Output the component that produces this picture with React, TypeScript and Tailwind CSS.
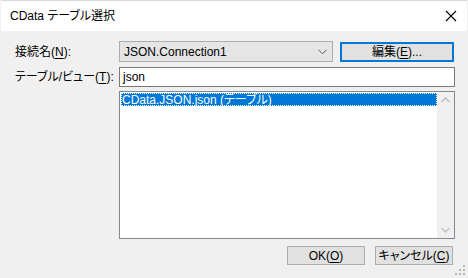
import React from "react";

const font = {
  fontFamily: '"Liberation Sans", "Noto Sans CJK JP", sans-serif',
  fontFeatureSettings: '"palt"',
};

function U({ c }: { c: string }) {
  return <span className="underline underline-offset-2">{c}</span>;
}

export default function App() {
  return (
    <div className="w-[468px] h-[278px] bg-[#f0f0f0] flex flex-col text-[12px] text-black overflow-hidden relative" style={font}>
      {/* title bar */}
      <div className="h-[31px] bg-white flex items-center justify-between pl-[9px] pr-[10px] mx-[1px] border-t border-[#d9d9d9]">
        <span className="text-[12px] leading-none whitespace-nowrap">CData テーブル選択</span>
        <svg width="12" height="12" viewBox="0 0 12 12">
          <path d="M1 1 L11 11 M11 1 L1 11" stroke="#000" strokeWidth="1.1" />
        </svg>
      </div>
      {/* body */}
      <div className="flex flex-col pl-[15px] pr-[13px] pt-[10px]">
        <div className="flex items-center h-[21px]">
          <span className="w-[104px] leading-none whitespace-nowrap">接続名(<U c="N" />):</span>
          <div className="w-[214px] h-[21px] bg-[#e5e5e5] border border-[#adadad] flex items-center justify-between pl-[4px] pr-[5px]">
            <span className="leading-none whitespace-nowrap">JSON.Connection1</span>
            <svg width="9" height="6" viewBox="0 0 9 6">
              <path d="M0.5 0.8 L4.5 4.8 L8.5 0.8" stroke="#555" strokeWidth="1" fill="none" />
            </svg>
          </div>
          <div className="ml-[7px] w-[114px] h-[20px] bg-[#e1e1e1] border-2 border-[#0078d7] flex items-center justify-center leading-none whitespace-nowrap">
            編集(<U c="E" />)...
          </div>
        </div>
        <div className="flex items-center h-[20px] mt-[5px]">
          <span className="w-[104px] leading-none whitespace-nowrap">テーブル/ビュー(<U c="T" />):</span>
          <div className="w-[336px] h-[20px] bg-white border border-[#7a7a7a] flex items-center pl-[3px] leading-none">json</div>
        </div>
        <div className="flex mt-[4px]">
          <div className="w-[104px]" />
          <div className="w-[336px] h-[148px] bg-white border border-[#828790] flex">
            <div className="flex-1 pl-[1px] pt-[1px]">
              <div className="h-[13px] bg-[#0078d7] text-white flex items-center pl-[1px] leading-none whitespace-nowrap outline-1 outline-dotted outline-offset-[-1px] outline-[#ffffff]">
                CData.JSON.json (テーブル)
              </div>
            </div>
            <div className="w-[17px] bg-[#f0f0f0] flex flex-col justify-between items-center py-[5px]">
              <svg width="9" height="6" viewBox="0 0 9 6">
                <path d="M0.5 5 L4.5 1 L8.5 5" stroke="#c0c0c0" strokeWidth="1.5" fill="none" />
              </svg>
              <svg width="9" height="6" viewBox="0 0 9 6">
                <path d="M0.5 1 L4.5 5 L8.5 1" stroke="#c0c0c0" strokeWidth="1.5" fill="none" />
              </svg>
            </div>
          </div>
        </div>
        <div className="flex justify-end gap-[10px] mt-[7px] mr-[2px]">
          <div className="w-[78px] h-[19px] bg-[#e1e1e1] border border-[#adadad] flex items-center justify-center leading-none whitespace-nowrap">
            OK(<U c="O" />)
          </div>
          <div className="w-[78px] h-[19px] bg-[#e1e1e1] border border-[#adadad] flex items-center justify-center leading-none whitespace-nowrap">
            キャンセル(<U c="C" />)
          </div>
        </div>
      </div>
      <svg className="absolute right-[3px] bottom-[3px]" width="10" height="10" viewBox="0 0 10 10">
        <rect x="8" y="0" width="2" height="2" fill="#b8b8b8" />
        <rect x="4" y="4" width="2" height="2" fill="#b8b8b8" />
        <rect x="8" y="4" width="2" height="2" fill="#b8b8b8" />
        <rect x="0" y="8" width="2" height="2" fill="#b8b8b8" />
        <rect x="4" y="8" width="2" height="2" fill="#b8b8b8" />
        <rect x="8" y="8" width="2" height="2" fill="#b8b8b8" />
      </svg>
    </div>
  );
}
